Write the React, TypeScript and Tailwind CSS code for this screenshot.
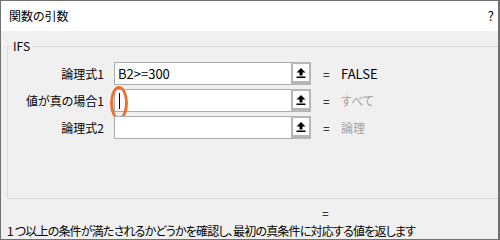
import React from "react"

// Collapse-dialog button icon (arrow up over a bar)
const CollapseIcon = (): JSX.Element => {
  return (
    <svg width="10" height="10" viewBox="0 0 10 10">
      <polygon points="5,0 9.5,4.5 6.5,4.5 6.5,7.5 3.5,7.5 3.5,4.5 0.5,4.5" fill="#000" />
      <rect x="0.5" y="8.5" width="9" height="1.5" fill="#000" />
    </svg>
  )
}

type Row = {
  label: string
  value: string
  result: string
  dim: boolean
  caret?: boolean
}

const rows: Row[] = [
  { label: "論理式1", value: "B2>=300", result: "FALSE", dim: false },
  { label: "値が真の場合1", value: "", result: "すべて", dim: true, caret: true },
  { label: "論理式2", value: "", result: "論理", dim: true },
]

const ArgRow = ({ row }: { row: Row }): JSX.Element => {
  return (
    <div className="flex items-center h-[23px]">
      <div className="w-[96px] text-right leading-none">{row.label}</div>
      <div className="ml-[10px] flex h-[23px] w-[197px]">
        <div className="relative flex-1 flex items-center bg-white border border-r-0 border-[#acacac] pl-[3px] text-[13px]">
          {row.value}
          {row.caret && (
            <>
              <span className="w-px h-[16px] bg-black ml-px" />
              {/* highlight ring round the caret */}
              <span className="absolute left-[-5px] top-[-4px] w-[18px] h-[34px] rounded-[50%] border-[3px] border-[#ee7130]" />
            </>
          )}
        </div>
        <div className="w-[20px] h-[23px] bg-[#b6b6b6] p-[2px] pb-[4px] flex">
          <div className="flex-1 bg-white flex items-center justify-center">
            <CollapseIcon />
          </div>
        </div>
      </div>
      <div className="ml-[12px] w-[18px]">=</div>
      <div className={row.dim ? "text-[#a2a2a2]" : "text-black text-[13px]"}>{row.result}</div>
    </div>
  )
}

const App = (): JSX.Element => {
  return (
    <div
      className="w-[500px] h-[240px] flex flex-col border border-r-2 border-[#707070] text-[12px] text-black [font-feature-settings:'palt'] overflow-hidden"
      style={{ fontFamily: "'Noto Sans CJK JP', 'Liberation Sans', sans-serif" }}
    >
      {/* Title bar */}
      <div className="h-[30px] bg-white flex items-center justify-between pl-[8px] pr-[4px] shrink-0">
        <span className="text-[12px]">関数の引数</span>
        <span className="text-[13px]">?</span>
      </div>

      {/* Body */}
      <div className="flex-1 bg-[#f0f0f0] pt-[7px] flex flex-col">
        <fieldset className="ml-[6px] h-[161px] border border-r-0 border-[#dcdcdc] flex flex-col">
          <legend className="ml-[3px] px-[2px] h-[16px] leading-[16px] text-[12px]">IFS</legend>
          <div className="mt-[8px] flex flex-col gap-[4px]">
            {rows.map((r) => (
              <ArgRow key={r.label} row={r} />
            ))}
          </div>
        </fieldset>

        <div className="ml-[321px] mt-[6px] h-[16px] leading-[16px]">=</div>
        <div className="ml-[6px] mt-[2px] leading-[16px] whitespace-nowrap tracking-[-0.8px]">
          1 つ以上の条件が満たされるかどうかを確認し、最初の真条件に対応する値を返します
        </div>
      </div>
    </div>
  )
}

export default App
